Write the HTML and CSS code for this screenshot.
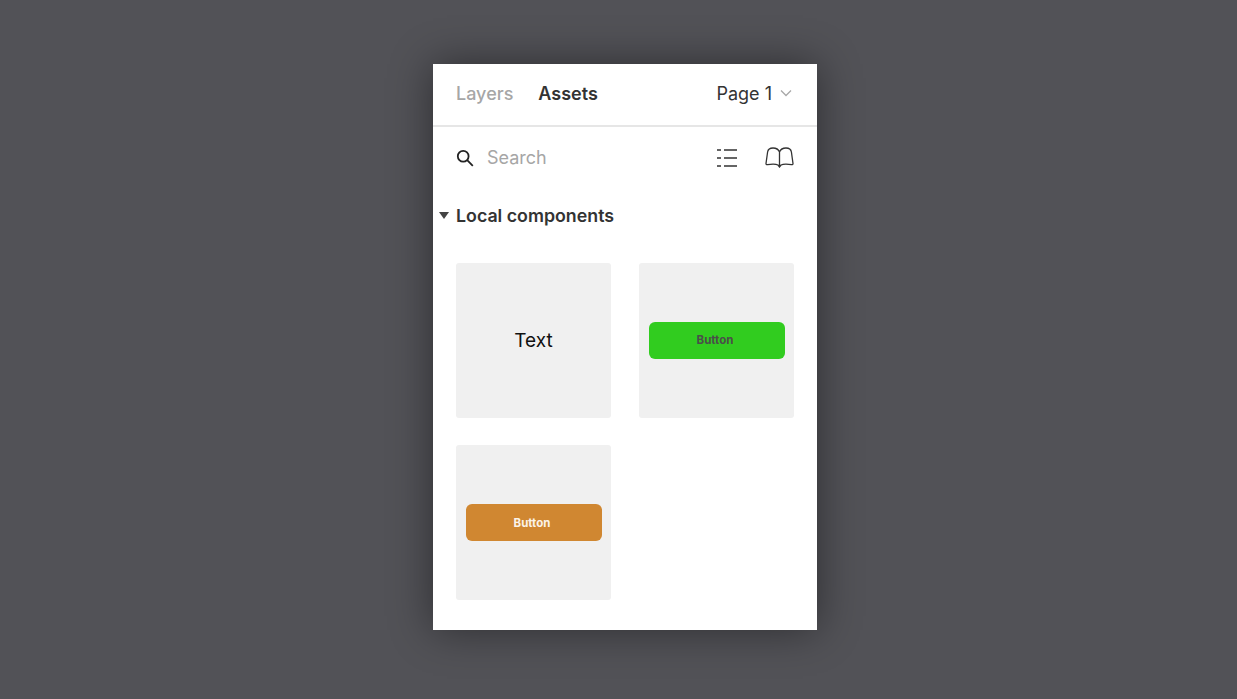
FILE: index.html
```html
<!DOCTYPE html>
<html lang="en">
<head>
    <meta charset="UTF-8">
    <meta name="viewport" content="width=device-width, initial-scale=1.0">
    <title>Assets panel</title>
    <link rel="stylesheet" href="styles.css">
</head>
<body>
    <div class="panel">
        <div class="tabs">
            <span class="tab">Layers</span>
            <span class="tab tab-active">Assets</span>
            <span class="page">Page 1
                <svg class="chevron" width="12" height="8" viewBox="0 0 12 8" fill="none" stroke="#a8a8a8" stroke-width="1.3"><path d="M1 1.500l5 5 5-5"/></svg>
            </span>
        </div>
        <div class="search">
            <svg class="search-icon" width="18" height="18" viewBox="0 0 18 18" fill="none" stroke="#222" stroke-width="1.8"><circle cx="7.200" cy="7.200" r="5.400"/><path d="M11.200 11.200l5.600 5.600"/></svg>
            <span class="search-text">Search</span>
            <svg class="list-icon" width="20" height="18" viewBox="0 0 20 18" fill="none" stroke="#333" stroke-width="1.500"><path d="M0 1h4M7 1h13M0 9h4M7 9h13M0 17h4M7 17h13"/></svg>
            <svg class="book-icon" width="29" height="21" viewBox="0 0 29 21" fill="none" stroke="#333" stroke-width="1.300"><path d="M14.500 5C13.500 2.500 11 1 8 1C5 1 3 2.500 2.600 5L1 16.500C1 17.500 1.500 17.700 2.500 17.600C7 17 11 17 13 18L14.500 20L16 18C18 17 22 17 26.500 17.600C27.500 17.700 28 17.500 28 16.500L26.400 5C26 2.500 24 1 21 1C18 1 15.500 2.500 14.500 5V19"/></svg>
        </div>
        <div class="section-title">
            <span class="caret"></span>
            Local components
        </div>
        <div class="grid">
            <div class="card"><span class="card-text">Text</span></div>
            <div class="card"><div class="btn btn-green">Button</div></div>
            <div class="card"><div class="btn btn-orange">Button</div></div>
        </div>
    </div>
</body>
</html>
```

FILE: styles.css
```css
* {
    margin: 0;
    padding: 0;
    box-sizing: border-box;
    font-family: Inter, "Liberation Sans", sans-serif;
}

body {
    background: #525257;
    height: 699px;
    padding-top: 64px;
    overflow: hidden;
}

.panel {
    width: 384px;
    height: 566px;
    margin-left: 433px;
    background: #fff;
    box-shadow: 0 0 40px rgba(0, 0, 0, 0.45);
}

.tabs {
    height: 63px;
    display: flex;
    align-items: center;
    gap: 25px;
    padding: 0 25px 3px 23px;
    border-bottom: 2px solid #e6e6e6;
    font-size: 18px;
}

.tab {
    color: #a6a6a6;
    font-weight: 500;
}

.tab-active {
    color: #333;
    font-weight: 600;
}

.page {
    margin-left: auto;
    display: flex;
    align-items: center;
    gap: 8px;
    color: #333;
    font-weight: 400;
}

.search {
    height: 61px;
    display: flex;
    align-items: center;
    padding: 0 23px 0 23px;
}

.search-icon {
    margin-right: 13px;
}

.search-text {
    color: #a6a6a6;
    font-size: 18px;
}

.list-icon {
    margin-left: auto;
    margin-right: 28px;
}

.section-title {
    display: flex;
    align-items: center;
    height: 24px;
    margin-top: 15px;
    padding-left: 6px;
    gap: 7px;
    font-size: 17.800px;
    font-weight: 600;
    color: #333;
}

.caret {
    width: 0;
    height: 0;
    border-left: 5px solid transparent;
    border-right: 5px solid transparent;
    border-top: 7px solid #444;
}

.grid {
    display: grid;
    grid-template-columns: 155px 155px;
    gap: 27.500px 28px;
    padding: 35.500px 23px 0 23px;
}

.card {
    height: 155px;
    background: #f0f0f0;
    border-radius: 3px;
    display: flex;
    align-items: center;
    justify-content: center;
}

.card-text {
    font-size: 19px;
    color: #111;
}

.btn {
    width: 136px;
    height: 37px;
    border-radius: 6px;
    display: flex;
    align-items: center;
    justify-content: center;
    padding-right: 3px;
    font-size: 11.500px;
    font-weight: 700;
}

.btn-green {
    background: #31cc1f;
    color: #4a4f4a;
}

.btn-orange {
    background: #d08731;
    color: #fbf3e8;
}
```
